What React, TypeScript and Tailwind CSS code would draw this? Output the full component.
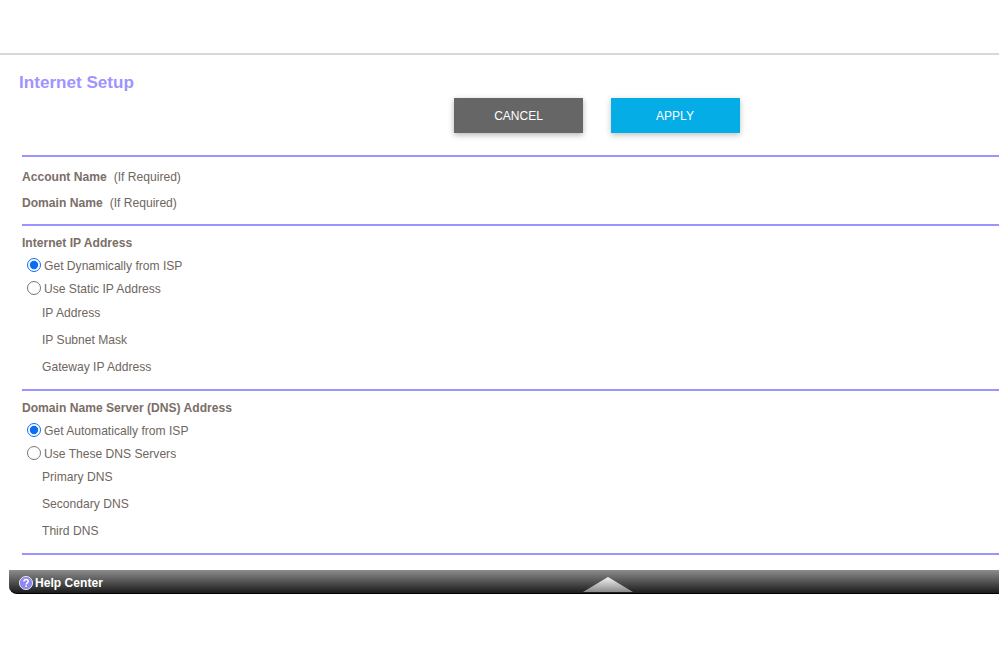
import React from 'react';

const font = { fontFamily: '"Liberation Sans", Arial, sans-serif' };

const Divider = () => <div className="h-[2px] bg-[#9a94ff]" />;

const Radio = ({ label, checked, name }: { label: string; checked?: boolean; name: string }) => (
  <label className="flex h-[23px] items-center pl-[5px] text-[12.1px] text-[#6f6660]">
    <input
      type="radio"
      name={name}
      defaultChecked={checked}
      className="m-0 mb-[4px] h-[14px] w-[14px] accent-[#0b6cf5]"
    />
    <span className="ml-[3px]">{label}</span>
  </label>
);

const Field = ({ label }: { label: string }) => (
  <div className="flex h-[27px] items-center pl-[20px] text-[12.1px] text-[#6f6660]">{label}</div>
);

const App: React.FC = () => {
  return (
    <div className="h-[651px] w-[999px] overflow-hidden bg-white" style={font}>
      <div className="h-[55px] border-b-2 border-[#d8d8d8]" />

      <div className="relative h-[100px]">
        <h1 className="pl-[19px] pt-[17px] text-[17.1px] font-bold leading-[22px] text-[#9d94ff]">Internet Setup</h1>
        <div className="absolute left-[454px] top-[43px] flex gap-[27.5px]">
          <button className="h-[35px] w-[129px] bg-[#666666] pt-[1px] text-[12px] text-white shadow-[0_2px_6px_rgba(0,0,0,0.3)]">
            CANCEL
          </button>
          <button className="h-[35px] w-[129px] bg-[#04ade6] pt-[1px] text-[12px] text-white shadow-[0_2px_6px_rgba(0,0,0,0.25)]">
            APPLY
          </button>
        </div>
      </div>

      <div className="ml-[22px]">
        <Divider />
        <div className="flex h-[29px] items-end text-[12.1px] text-[#6f6660]">
          <span className="font-bold text-[#7a6e67]">Account Name</span>
          <span className="ml-[7px]">(If Required)</span>
        </div>
        <div className="flex h-[26px] items-end text-[12.1px] text-[#6f6660]">
          <span className="font-bold text-[#7a6e67]">Domain Name</span>
          <span className="ml-[7px]">(If Required)</span>
        </div>
        <div className="h-[12px]" />
        <Divider />

        <div className="flex h-[26px] items-end text-[12.1px] font-bold text-[#7a6e67]">Internet IP Address</div>
        <div className="mb-[-1px] pt-[3px]">
          <Radio name="ip" label="Get Dynamically from ISP" checked />
          <Radio name="ip" label="Use Static IP Address" />
        </div>
        <Field label="IP Address" />
        <Field label="IP Subnet Mask" />
        <Field label="Gateway IP Address" />
        <div className="h-[8px]" />
        <Divider />

        <div className="flex h-[26px] items-end text-[12.1px] font-bold text-[#7a6e67]">Domain Name Server (DNS) Address</div>
        <div className="mb-[-2px] pt-[3px]">
          <Radio name="dns" label="Get Automatically from ISP" checked />
          <Radio name="dns" label="Use These DNS Servers" />
        </div>
        <Field label="Primary DNS" />
        <Field label="Secondary DNS" />
        <Field label="Third DNS" />
        <div className="h-[8px]" />
        <Divider />
      </div>

      <div className="relative ml-[9px] mt-[15px] flex h-[24px] items-center rounded-bl-[8px] border-b border-black bg-gradient-to-b from-[#8c8c8c] via-[#555555] to-[#1c1c1c] pl-[10px] pt-[3px]">
        <svg width="14" height="14" viewBox="0 0 14 14" className="shrink-0">
          <circle cx="7" cy="7" r="6.6" fill="#8f86f0" stroke="#ffffff" strokeWidth="0.8" />
          <path d="M4.9 5.4c0-1.3 1-2 2.2-2s2.1.7 2.1 1.8c0 1.6-2 1.6-2 3.2" fill="none" stroke="#ffffff" strokeWidth="1.5" />
          <rect x="6.3" y="9.4" width="1.6" height="1.6" fill="#ffffff" />
        </svg>
        <span className="ml-[2px] text-[12.1px] font-bold text-white">Help Center</span>
        <svg width="50" height="15" viewBox="0 0 50 15" className="absolute left-[574px] top-[7px]">
          <defs>
            <linearGradient id="tri" x1="0" y1="0" x2="0" y2="1">
              <stop offset="0" stopColor="#f4f4f4" />
              <stop offset="1" stopColor="#8a8a8a" />
            </linearGradient>
          </defs>
          <polygon points="25,0 50,15 0,15" fill="url(#tri)" />
        </svg>
      </div>
    </div>
  );
};

export default App;
